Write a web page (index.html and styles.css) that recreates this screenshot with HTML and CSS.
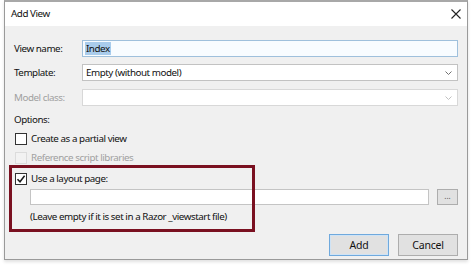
FILE: index.html
```html
<!DOCTYPE html>
<html>
<head>
<meta charset="utf-8">
<link rel="stylesheet" href="styles.css">
</head>
<body>
<div class="dialog">
  <div class="titlebar">
    <span class="title">Add View</span>
    <svg class="close" width="10" height="10" viewBox="0 0 10 10"><path d="M0.5 0.5 L9.5 9.5 M9.5 0.5 L0.5 9.5" stroke="#222" stroke-width="1.1" fill="none"/></svg>
  </div>
  <div class="content">
    <div class="row r1">
      <span class="label">View name:</span>
      <div class="field focused"><span class="sel">Index</span></div>
    </div>
    <div class="row r2">
      <span class="label">Template:</span>
      <div class="field combo"><span>Empty (without model)</span>
        <svg class="chev" width="7" height="4" viewBox="0 0 7 4"><path d="M0.5 0.5 L3.5 3.5 L6.5 0.5" stroke="#707070" stroke-width="1" fill="none"/></svg>
      </div>
    </div>
    <div class="row r3">
      <span class="label disabled">Model class:</span>
      <div class="field combo off">
        <svg class="chev" width="7" height="4" viewBox="0 0 7 4"><path d="M0.5 0.5 L3.5 3.5 L6.5 0.5" stroke="#c0c0c0" stroke-width="1" fill="none"/></svg>
      </div>
    </div>
    <div class="options">Options:</div>
    <div class="check c1"><span class="box"></span><span>Create as a partial view</span></div>
    <div class="check c2 disabled"><span class="box off"></span><span>Reference script libraries</span></div>
    <div class="check c3"><span class="box"><svg width="10" height="10" viewBox="0 0 10 10"><path d="M1.5 5.2 L4 7.8 L8.6 1.8" stroke="#1a1a1a" stroke-width="1.5" fill="none"/></svg></span><span>Use a layout page:</span></div>
    <div class="layoutrow">
      <div class="field wide"></div>
      <div class="btn dots">...</div>
    </div>
    <div class="hint">(Leave empty if it is set in a Razor _viewstart file)</div>
    <div class="buttons">
      <div class="btn big default">Add</div>
      <div class="btn big">Cancel</div>
    </div>
  </div>
  <div class="highlight"></div>
</div>
</body>
</html>
```
FILE: styles.css
```css
* { box-sizing: border-box; }
html, body { margin: 0; padding: 0; background: #ffffff; }
body {
  font-family: "Noto Sans", "Open Sans", sans-serif;
  font-size: 9.8px;
  letter-spacing: -0.45px;
  color: #111111;
  width: 474px;
  height: 267px;
  overflow: hidden;
}
.dialog {
  position: relative;
  margin-left: 4px;
  width: 464px;
  height: 260px;
  border-top: 2px solid #a8a8a8;
  border-left: 1px solid #9a9a9a;
  border-right: 1px solid #9a9a9a;
  border-bottom: 1px solid #9a9a9a;
  background: #f0f0f0;
  box-shadow: 0 2px 3px rgba(0,0,0,0.12);
}
.titlebar {
  height: 24px;
  background: #ffffff;
  display: flex;
  align-items: center;
  justify-content: space-between;
  padding: 0 6px 0 6px;
}
.title { line-height: 16px; }
.close { margin-top: -1px; }
.content {
  padding: 14px 9px 0 9px;
  display: flex;
  flex-direction: column;
}
.row { display: flex; align-items: center; height: 17px; }
.r2 { margin-top: 7px; }
.r3 { margin-top: 8px; }
.label { width: 68px; line-height: 16px; white-space: nowrap; }
.disabled { color: #a0a0a0; }
.field {
  flex: 1;
  height: 17px;
  background: #ffffff;
  border: 1px solid #bcbcbc;
  display: flex;
  align-items: center;
  padding-left: 2px;
  line-height: 15px;
  position: relative;
}
.focused { border-color: #9fc0dc; background: #f8fcff; }
.sel { background: #a9ccec; padding: 0 1px; line-height: 13px; }
.combo { border-color: #c2c2c2; padding-left: 3px; }
.off { border-color: #d8d8d8; }
.chev { position: absolute; right: 5px; top: 6px; }
.options { margin-top: 6px; line-height: 16px; }
.check { display: flex; align-items: center; height: 16px; padding-left: 1px; line-height: 16px; white-space: nowrap; }
.c1 { margin-top: 3px; }
.c2 { margin-top: 3px; }
.c3 { margin-top: 5px; }
.box {
  width: 12px;
  height: 12px;
  border: 1px solid #333333;
  background: #ffffff;
  margin-right: 4px;
  display: flex;
  align-items: center;
  justify-content: center;
}
.box.off { border-color: #dcdcdc; background: #f2f2f2; }
.layoutrow { display: flex; margin-top: 2px; padding-left: 16px; height: 16px; }
.wide { flex: none; width: 399px; height: 16px; border-color: #c4c4c4; }
.btn {
  background: #e1e1e1;
  border: 1px solid #adadad;
  display: flex;
  align-items: center;
  justify-content: center;
}
.dots { width: 21px; height: 16px; margin-left: 8px; font-size: 8px; letter-spacing: 0; line-height: 10px; color: #555; padding-bottom: 2px; }
.hint { margin-top: 4px; padding-left: 16px; line-height: 16px; white-space: nowrap; }
.buttons { display: flex; justify-content: flex-end; gap: 9px; margin-top: 9px; }
.big { width: 60px; height: 22px; font-size: 10.5px; letter-spacing: -0.2px; }
.default { border-color: #6fa9dd; box-shadow: inset 0 0 0 1px #cfe3f5; }
.highlight {
  position: absolute;
  left: 4px;
  top: 163px;
  width: 246px;
  height: 67px;
  border: 3px solid #7a1020;
  pointer-events: none;
}
```
